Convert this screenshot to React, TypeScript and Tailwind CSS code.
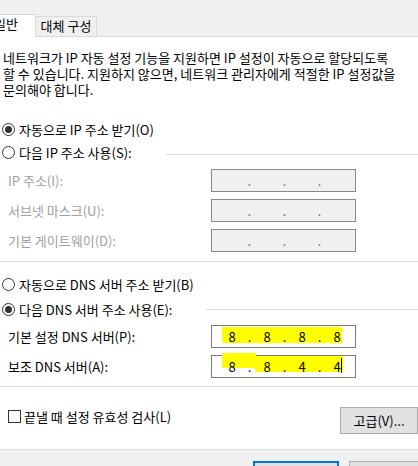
import React from "react";

function Radio({ checked }: { checked?: boolean }) {
  return (
    <span className="w-[13px] h-[13px] rounded-full border border-[#333333] bg-white flex items-center justify-center shrink-0">
      {checked && <span className="w-[7px] h-[7px] rounded-full bg-[#333333]" />}
    </span>
  );
}

function IpBox({
  values,
  disabled,
  children,
}: {
  values?: string[];
  disabled?: boolean;
  children?: React.ReactNode;
}) {
  return (
    <div
      className={
        disabled
          ? "relative w-[145px] h-[23px] border border-[#8a8a8a] bg-[#f0f0f0] flex items-center pl-[6px] text-[12px] text-[#6d6d6d] leading-[16px] shrink-0"
          : "relative w-[145px] h-[23px] border border-[#7a7a7a] bg-white flex items-center pl-[6px] text-[13px] text-black leading-[16px] shrink-0"
      }
    >
      {children}
      {[0, 1, 2, 3].map((i) => (
        <React.Fragment key={i}>
          <span className="relative w-[28px] text-center">{values ? values[i] : ""}</span>
          {i < 3 && <span className="relative w-[7px] text-center">.</span>}
        </React.Fragment>
      ))}
    </div>
  );
}

export default function App() {
  return (
    <div className="w-[418px] h-[466px] overflow-hidden bg-white flex flex-col *:shrink-0 font-['Noto_Sans_CJK_KR','Noto_Sans',sans-serif] text-[13px] text-black leading-[16px]">
      {/* Tab strip */}
      <div className="h-[37px] bg-[#f0f0f0] flex items-end">
        <div className="w-[36px] h-[23px] bg-white border-t border-r border-[#d9d9d9] flex justify-end pr-[17px] pt-[1px] whitespace-nowrap overflow-hidden">
          <span>일반</span>
        </div>
        <div className="w-[61px] h-[21px] bg-[#f0f0f0] border-t border-r border-b border-[#d9d9d9] flex justify-center pt-[1px] whitespace-nowrap">
          <span>대체 구성</span>
        </div>
        <div className="flex-1 h-[21px] border-b border-[#d9d9d9]" />
      </div>

      {/* Description */}
      <p className="mt-[13px] px-[3px] leading-[16px] whitespace-nowrap">
        네트워크가 IP 자동 설정 기능을 지원하면 IP 설정이 자동으로 할당되도록
        <br />할 수 있습니다. 지원하지 않으면, 네트워크 관리자에게 적절한 IP 설정값을
        <br />문의해야 합니다.
      </p>

      {/* IP radios */}
      <div className="mt-[20px] h-[23px] flex items-center pl-[2px] gap-[4px]">
        <Radio checked />
        <span>자동으로 IP 주소 받기(O)</span>
      </div>
      <div className="h-[23px] flex items-center pl-[2px] gap-[4px]">
        <Radio />
        <span className="whitespace-nowrap">다음 IP 주소 사용(S):</span>
        <div className="flex-1 h-px bg-[#dcdcdc] ml-[30px] mt-[4px]" />
      </div>

      <div className="mt-[5px] flex flex-col gap-[7px] pl-[8px] text-[#a0a0a0]">
        <div className="h-[23px] flex items-center">
          <span className="w-[203px]">IP 주소(I):</span>
          <IpBox disabled />
        </div>
        <div className="h-[23px] flex items-center">
          <span className="w-[203px]">서브넷 마스크(U):</span>
          <IpBox disabled />
        </div>
        <div className="h-[23px] flex items-center">
          <span className="w-[203px]">기본 게이트웨이(D):</span>
          <IpBox disabled />
        </div>
      </div>
      <div className="mt-[9px] h-px bg-[#dcdcdc]" />

      {/* DNS radios */}
      <div className="mt-[10px] h-[25px] flex items-center pl-[2px] gap-[4px]">
        <Radio />
        <span>자동으로 DNS 서버 주소 받기(B)</span>
      </div>
      <div className="h-[25px] flex items-center pl-[2px] gap-[4px]">
        <Radio checked />
        <span className="whitespace-nowrap">다음 DNS 서버 주소 사용(E):</span>
        <div className="flex-1 h-px bg-[#dcdcdc] ml-[30px]" />
      </div>

      <div className="mt-[3px] flex flex-col gap-[7px] pl-[8px]">
        <div className="h-[23px] flex items-center">
          <span className="w-[203px]">기본 설정 DNS 서버(P):</span>
          <IpBox values={["8", "8", "8", "8"]}>
            <span className="absolute left-[10px] top-[1px] w-[120px] h-[16px] bg-[#ffff00]" />
          </IpBox>
        </div>
        <div className="h-[23px] flex items-center">
          <span className="w-[203px]">보조 DNS 서버(A):</span>
          <IpBox values={["8", "8", "4", "4"]}>
            <span className="absolute left-[10px] top-[-3px] w-[34px] h-[15px] bg-[#ffff00]" />
            <span className="absolute left-[43px] top-0 w-[88px] h-[16px] bg-[#ffff00]" />
            <span className="absolute left-[129px] top-[2px] w-px h-[15px] bg-black z-10" />
          </IpBox>
        </div>
      </div>
      <div className="mt-[8px] h-px bg-[#dcdcdc]" />

      {/* Validate + Advanced */}
      <div className="mt-[20px] h-[27px] flex items-start pl-[8px]">
        <div className="mt-[3px] flex items-center gap-[3px] h-[13px]">
          <span className="w-[13px] h-[13px] border border-[#333333] bg-white shrink-0" />
          <span className="whitespace-nowrap">끝낼 때 설정 유효성 검사(L)</span>
        </div>
        <div className="ml-auto w-[78px] h-[27px] border border-[#adadad] bg-[#e1e1e1] flex items-center justify-center whitespace-nowrap">
          고급(V)...
        </div>
      </div>

      {/* Bottom bar */}
      <div className="mt-[15px] h-[17px] overflow-hidden border-t border-[#dcdcdc] bg-[#f0f0f0] pt-[11px] pl-[253px] flex items-start gap-[10px]">
        <div className="w-[86px] h-[24px] border-2 border-[#0078d7] bg-[#e1e1e1] shrink-0" />
        <div className="w-[86px] h-[24px] border border-[#adadad] bg-[#e1e1e1] shrink-0" />
      </div>
    </div>
  );
}
